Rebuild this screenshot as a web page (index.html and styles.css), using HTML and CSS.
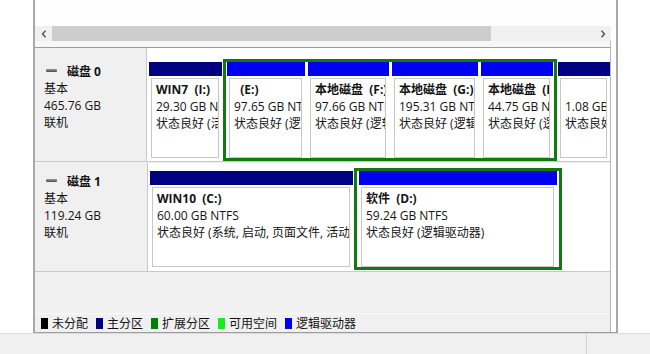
FILE: index.html
```html
<!DOCTYPE html>
<html lang="zh-CN">
<head>
  <meta charset="UTF-8" />
  <meta name="viewport" content="width=device-width, initial-scale=1.0" />
  <title>磁盘管理</title>
  <link rel="stylesheet" href="styles.css">
</head>
<body>
  <div class="screen">
    <div class="workspace">
      <div class="gutter"></div>

      <div class="frame">
        <div class="volume-list"></div>

        <div class="hscroll">
          <span class="arrow">
            <svg width="6" height="8" viewBox="0 0 6 8"><polyline points="4.5,0.8 1.5,4 4.5,7.2" fill="none" stroke="#505050" stroke-width="1.4"/></svg>
          </span>
          <div class="track"><div class="thumb"></div></div>
          <span class="arrow">
            <svg width="6" height="8" viewBox="0 0 6 8"><polyline points="1.5,0.8 4.5,4 1.5,7.2" fill="none" stroke="#505050" stroke-width="1.4"/></svg>
          </span>
        </div>

        <div class="spacer"></div>

        <div class="disk-panel">
          <!-- disk 0 -->
          <div class="disk disk-0">
            <div class="disk-info">
              <div class="disk-name"><span class="disk-icon"></span>磁盘 0</div>
              <div>基本</div>
              <div>465.76 GB</div>
              <div>联机</div>
            </div>
            <div class="parts">
              <div class="part w-win7">
                <div class="part-head"></div>
                <div class="part-body">
                  <div class="part-title">WIN7&nbsp; (I:)</div>
                  <div>29.30 GB NTFS</div>
                  <div>状态良好 (活动, 主分区)</div>
                </div>
              </div>
              <div class="ext ext-0">
                <div class="part logical w-e">
                  <div class="part-head"></div>
                  <div class="part-body">
                    <div class="part-title">&nbsp; (E:)</div>
                    <div>97.65 GB NTFS</div>
                    <div>状态良好 (逻辑驱动器)</div>
                  </div>
                </div>
                <div class="part logical w-f">
                  <div class="part-head"></div>
                  <div class="part-body">
                    <div class="part-title">本地磁盘&nbsp; (F:)</div>
                    <div>97.66 GB NTFS</div>
                    <div>状态良好 (逻辑驱动器)</div>
                  </div>
                </div>
                <div class="part logical w-g">
                  <div class="part-head"></div>
                  <div class="part-body">
                    <div class="part-title">本地磁盘&nbsp; (G:)</div>
                    <div>195.31 GB NTFS</div>
                    <div>状态良好 (逻辑驱动器)</div>
                  </div>
                </div>
                <div class="part logical grow">
                  <div class="part-head"></div>
                  <div class="part-body">
                    <div class="part-title">本地磁盘&nbsp; (H:)</div>
                    <div>44.75 GB NTFS</div>
                    <div>状态良好 (逻辑驱动器)</div>
                  </div>
                </div>
              </div>
              <div class="part w-rec">
                <div class="part-head"></div>
                <div class="part-body">
                  <div class="part-title">&nbsp;</div>
                  <div>1.08 GB NTFS</div>
                  <div>状态良好 (恢复分区)</div>
                </div>
              </div>
            </div>
          </div>

          <!-- disk 1 -->
          <div class="disk disk-1">
            <div class="disk-info">
              <div class="disk-name"><span class="disk-icon"></span>磁盘 1</div>
              <div>基本</div>
              <div>119.24 GB</div>
              <div>联机</div>
            </div>
            <div class="parts">
              <div class="part w-win10">
                <div class="part-head"></div>
                <div class="part-body">
                  <div class="part-title">WIN10&nbsp; (C:)</div>
                  <div>60.00 GB NTFS</div>
                  <div>状态良好 (系统, 启动, 页面文件, 活动, 故障转储, 主分区)</div>
                </div>
              </div>
              <div class="ext ext-1">
                <div class="part logical grow">
                  <div class="part-head"></div>
                  <div class="part-body">
                    <div class="part-title">软件&nbsp; (D:)</div>
                    <div>59.24 GB NTFS</div>
                    <div>状态良好 (逻辑驱动器)</div>
                  </div>
                </div>
              </div>
            </div>
          </div>

          <div class="filler"></div>

          <div class="legend">
            <span class="legend-item"><i class="swatch sw-unalloc"></i>未分配</span>
            <span class="legend-item"><i class="swatch sw-primary"></i>主分区</span>
            <span class="legend-item"><i class="swatch sw-extended"></i>扩展分区</span>
            <span class="legend-item"><i class="swatch sw-free"></i>可用空间</span>
            <span class="legend-item"><i class="swatch sw-logical"></i>逻辑驱动器</span>
          </div>
        </div>
      </div>

      <div class="gutter gutter-right"></div>
    </div>

    <div class="statusbar">
      <div class="status-cell"></div>
      <div class="status-cell last"></div>
    </div>
  </div>
</body>
</html>
```

FILE: styles.css
```css
* {
  box-sizing: border-box;
}
html, body {
  margin: 0;
}
body {
  width: 650px;
  height: 354px;
  overflow: hidden;
  background: #fff;
  font-family: "Open Sans", "Noto Sans CJK SC", sans-serif;
  font-size: 12px;
  color: #141414;
}
.screen {
  display: flex;
  flex-direction: column;
  height: 354px;
}
.workspace {
  display: flex;
  height: 333px;
}
.gutter {
  width: 33px;
  background: #fff;
}
.gutter-right {
  flex: 1;
}
.frame {
  width: 585px;
  display: flex;
  flex-direction: column;
  border-left: 2px solid #a9a9a9;
  border-right: 2px solid #a9a9a9;
  border-bottom: 1px solid #9c9c9c;
  background: #fff;
}
.volume-list {
  height: 26px;
  background: #fefefe;
}

/* horizontal scrollbar */
.hscroll {
  display: flex;
  height: 15px;
  margin-right: 5px;
  background: #f0f0f0;
}
.arrow {
  width: 17px;
  display: flex;
  align-items: center;
  justify-content: center;
}
.track {
  flex: 1;
}
.thumb {
  width: 439px;
  height: 100%;
  background: #cdcdcd;
}
.spacer {
  height: 6px;
  margin-right: 5px;
  background: #f7f7f7;
  border-right: 1px solid #b8b8b8;
}

/* disks */
.disk-panel {
  flex: 1;
  margin-right: 5px;
  display: flex;
  flex-direction: column;
  border-top: 1px solid #9c9c9c;
  border-right: 1px solid #b8b8b8;
  background: #f0f0f0;
}
.disk {
  display: flex;
  border-bottom: 1px solid #c9c9c9;
  background: #fff;
}
.disk-0 {
  height: 114px;
}
.disk-1 {
  height: 109px;
  margin-top: 1px;
}
.disk-info {
  width: 113px;
  padding-left: 9px;
  line-height: 17px;
  background: #f0f0f0;
  border-right: 1px solid #c9c9c9;
}
.disk-0 .disk-info {
  padding-top: 15px;
}
.disk-1 .disk-info {
  padding-top: 10px;
}
.disk-name {
  display: flex;
  align-items: center;
  gap: 10px;
  font-weight: 700;
}
.disk-icon {
  width: 11px;
  height: 3px;
  margin-left: 2px;
  margin-top: -2px;
  border-radius: 1px;
  background: linear-gradient(#9a9a9a, #4c4c4c);
}

.parts {
  flex: 1;
  display: flex;
  gap: 1px;
  padding-left: 2px;
}
.disk-0 .parts {
  padding-top: 11px;
}
.disk-1 .parts {
  padding-top: 5px;
  padding-bottom: 1px;
}
.part {
  display: flex;
  flex-direction: column;
  margin: 3px 0;
  min-width: 0;
}
.part-head {
  height: 14px;
  background: #000080;
}
.part.logical .part-head {
  background: #0000f0;
}
.part-body {
  flex: 1;
  margin: 2px 3px 0 2px;
  padding: 2px 0 0 4px;
  border: 1px solid #c6c6c6;
  background: #fff;
  line-height: 17px;
  white-space: nowrap;
  overflow: hidden;
}
.part-title {
  font-weight: 700;
}

.ext {
  display: flex;
  gap: 3px;
  border: 3px solid #107a10;
}
.ext .part {
  margin: 0;
}
.ext-0 {
  width: 334px;
  padding: 0 1px;
}
.ext-1 {
  width: 208px;
  padding: 0 2px 0 2px;
}

.w-win7 { width: 73px; }
.w-e { width: 78px; }
.w-f { width: 81px; }
.w-g { width: 86px; }
.w-rec { width: 52px; }
.w-win10 { width: 203px; }
.grow { flex: 1; }

.filler {
  flex: 1;
}

/* legend */
.legend {
  height: 19px;
  display: flex;
  align-items: center;
  gap: 8px;
  padding-left: 6px;
  border-top: 1px solid #fafafa;
  background: #f0f0f0;
}
.legend-item {
  display: flex;
  align-items: center;
  gap: 4px;
}
.swatch {
  display: inline-block;
  width: 7px;
  height: 11px;
}
.sw-unalloc { background: #000; }
.sw-primary { background: #000080; }
.sw-extended { background: #008000; }
.sw-free { background: #1ee81e; }
.sw-logical { background: #0000f0; }

/* status bar */
.statusbar {
  flex: 1;
  display: flex;
  background: #f0f0f0;
  border-top: 1px solid #dcdcdc;
}
.status-cell {
  width: 587px;
  border-right: 1px solid #d4d4d4;
}
.status-cell.last {
  flex: 1;
  border-right: none;
}
```
